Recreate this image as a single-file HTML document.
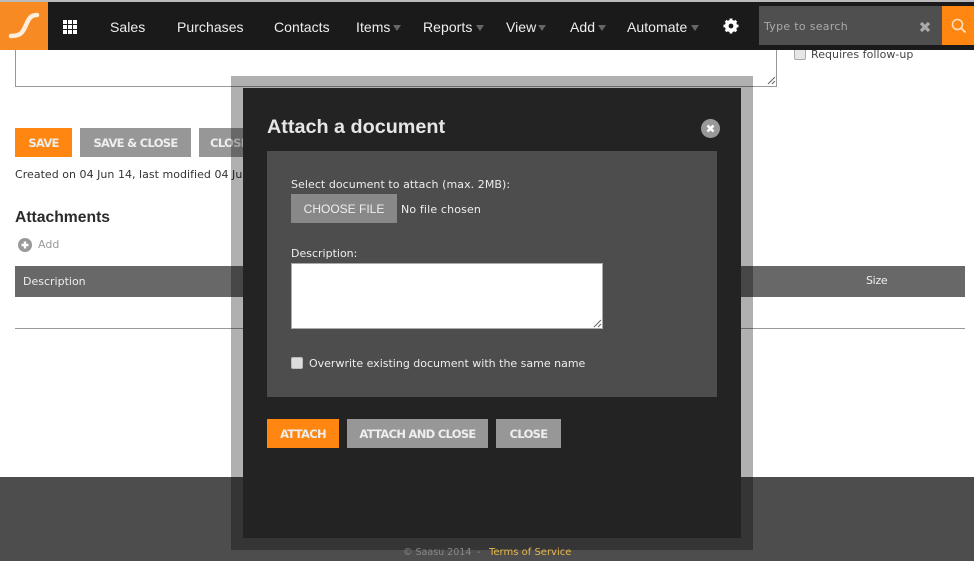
<!DOCTYPE html>
<html><head><meta charset="utf-8">
<style>
html,body{margin:0;padding:0;background:#fff}
#p{position:relative;width:974px;height:561px;overflow:hidden;background:#fff;font-family:"DejaVu Sans","Liberation Sans",sans-serif;font-size:11px;color:#333}
#p div,#p span.a{position:absolute;white-space:nowrap}
.n{font-family:"Liberation Sans",sans-serif;font-size:14px;color:#eee;top:19px;line-height:16px;letter-spacing:.05px}
.t{width:0;height:0;border-left:4px solid transparent;border-right:4px solid transparent;border-top:6px solid #666;top:25px}
.b{height:29px;line-height:30px;text-align:center;color:#eee;font-weight:bold;font-size:11.5px;background:#979797;letter-spacing:-.7px}
.o{background:#ff8711}
</style></head><body>
<div id="p">
<div style="left:0;top:0;width:974px;height:2px;background:#bbb"></div>

<!-- page content -->
<div style="left:15px;top:40px;width:760px;height:45px;border:1px solid #999;background:#fff"></div>
<svg style="position:absolute;left:767px;top:76px" width="9" height="9"><path d="M1 8L8 1M5 8L8 5" stroke="#666" stroke-width="1"/></svg>
<div style="left:794px;top:48px;width:10px;height:10px;border:1px solid #aaa;border-radius:2px;background:#e6e6e6"></div>
<div style="left:811px;top:48px;line-height:14px;font-size:11px;color:#444;letter-spacing:.05px">Requires follow-up</div>

<div class="b o" style="left:15px;top:128px;width:57px">SAVE</div>
<div class="b" style="left:80px;top:128px;width:111px">SAVE &amp; CLOSE</div>
<div class="b" style="left:199px;top:128px;width:60px">CLOSE</div>
<div style="left:15px;top:168px;line-height:14px;font-size:11px;color:#333;letter-spacing:.03px">Created on 04 Jun 14, last modified 04 Jun 14</div>
<div style="left:15px;top:209px;font:bold 15.7px/18px 'Liberation Sans',sans-serif;color:#2b2b2b">Attachments</div>
<svg style="position:absolute;left:18px;top:238px" width="14" height="14"><circle cx="7" cy="7" r="7" fill="#999"/><path d="M7 3.5V10.5M3.5 7H10.5" stroke="#fff" stroke-width="2.4"/></svg>
<div style="left:38px;top:238px;line-height:14px;font-size:11px;color:#999">Add</div>
<div style="left:15px;top:266px;width:950px;height:31px;background:#686868"></div>
<div style="left:23px;top:275px;line-height:14px;font-size:11px;color:#eee">Description</div>
<div style="left:866px;top:274px;line-height:14px;font-size:11px;color:#eee;letter-spacing:-.3px">Size</div>
<div style="left:15px;top:328px;width:950px;height:1px;background:#999"></div>

<!-- footer -->
<div style="left:0;top:477px;width:974px;height:84px;background:#4d4d4d"></div>

<!-- nav -->
<div style="left:0;top:2px;width:974px;height:48px;background:#1a1a1a"></div>
<div style="left:0;top:2px;width:48px;height:48px;background:#f78a23"></div>
<svg style="position:absolute;left:0;top:2px" width="48" height="48"><path d="M11 34C21 34 23 30 26 23C29 16 31 13 37 13" fill="none" stroke="#fdeedd" stroke-width="4.5" stroke-linecap="round"/></svg>
<svg style="position:absolute;left:63px;top:20px" width="14" height="14" fill="#fff"><rect x="0" y="0" width="4" height="4"/><rect x="5" y="0" width="4" height="4"/><rect x="10" y="0" width="4" height="4"/><rect x="0" y="5" width="4" height="4"/><rect x="5" y="5" width="4" height="4"/><rect x="10" y="5" width="4" height="4"/><rect x="0" y="10" width="4" height="4"/><rect x="5" y="10" width="4" height="4"/><rect x="10" y="10" width="4" height="4"/></svg>
<div class="n" style="left:110px">Sales</div>
<div class="n" style="left:177px">Purchases</div>
<div class="n" style="left:274px">Contacts</div>
<div class="n" style="left:356px">Items</div><div class="t" style="left:393px"></div>
<div class="n" style="left:423px">Reports</div><div class="t" style="left:476px"></div>
<div class="n" style="left:506px">View</div><div class="t" style="left:538px"></div>
<div class="n" style="left:570px">Add</div><div class="t" style="left:598px"></div>
<div class="n" style="left:627px">Automate</div><div class="t" style="left:691px"></div>
<svg style="position:absolute;left:723px;top:18px" width="16" height="16" viewBox="0 0 16 16"><circle cx="8" cy="8" r="4.5" fill="none" stroke="#fff" stroke-width="3.2"/><path d="M8 0.5V15.5M0.5 8H15.5M2.7 2.7L13.3 13.3M13.3 2.7L2.7 13.3" stroke="#fff" stroke-width="2.8"/><circle cx="8" cy="8" r="2.4" fill="#1a1a1a"/></svg>
<div style="left:759px;top:6px;width:183px;height:39px;background:#4f4f4f"></div>
<div style="left:764px;top:20px;line-height:14px;font-size:11px;color:#aaa;letter-spacing:.3px">Type to search</div>
<svg style="position:absolute;left:919px;top:21px" width="12" height="12"><path d="M2 2L10 10M10 2L2 10" stroke="#aaa" stroke-width="3.2"/></svg>
<div style="left:942px;top:6px;width:32px;height:39px;background:#ff8711"></div>
<svg style="position:absolute;left:951px;top:18px" width="16" height="16"><circle cx="6.5" cy="6.5" r="5" fill="none" stroke="#fde3c4" stroke-width="1.5"/><path d="M10 10L14.5 14.5" stroke="#fde3c4" stroke-width="1.8"/></svg>

<!-- modal -->
<div style="left:231px;top:76px;width:498px;height:450px;border:12px solid rgba(0,0,0,.31);background:#232323;background-clip:padding-box"></div>
<div style="left:403px;top:546px;line-height:13px;font-size:9.5px;color:#888">© Saasu 2014</div>
<div style="left:477px;top:546px;line-height:13px;font-size:9.5px;color:#888">-</div>
<div style="left:489px;top:546px;line-height:13px;font-size:10px;color:#e8b84a">Terms of Service</div>
<div style="left:267px;top:116px;font:bold 19.8px/23px 'Liberation Sans',sans-serif;color:#e6e6e6">Attach a document</div>
<svg style="position:absolute;left:701px;top:119px" width="19" height="19"><circle cx="9.5" cy="9.5" r="9.5" fill="#999"/><path d="M6.5 6.5L12.5 12.5M12.5 6.5L6.5 12.5" stroke="#fff" stroke-width="2.6"/></svg>
<div style="left:267px;top:151px;width:450px;height:246px;background:#4d4d4d"></div>
<div style="left:291px;top:178px;line-height:14px;font-size:11px;color:#eee;letter-spacing:.06px">Select document to attach (max. 2MB):</div>
<div style="left:291px;top:194px;width:106px;height:29px;text-align:center;background:#888;color:#eee;font:12px/30px 'Liberation Sans',sans-serif">CHOOSE FILE</div>
<div style="left:401px;top:203px;line-height:14px;font-size:11px;color:#eee;letter-spacing:.15px">No file chosen</div>
<div style="left:291px;top:247px;line-height:14px;font-size:11px;color:#eee">Description:</div>
<div style="left:291px;top:263px;width:310px;height:64px;border:1px solid #aaa;background:#fff"></div>
<svg style="position:absolute;left:593px;top:319px" width="9" height="9"><path d="M1 8L8 1M5 8L8 5" stroke="#666" stroke-width="1"/></svg>
<div style="left:291px;top:357px;width:10px;height:10px;border:1px solid #bbb;border-radius:2px;background:#ddd"></div>
<div style="left:309px;top:357px;line-height:14px;font-size:11px;color:#eee">Overwrite existing document with the same name</div>
<div class="b o" style="left:267px;top:419px;width:72px">ATTACH</div>
<div class="b" style="left:347px;top:419px;width:141px">ATTACH AND CLOSE</div>
<div class="b" style="left:496px;top:419px;width:65px">CLOSE</div>
</div>
</body></html>
